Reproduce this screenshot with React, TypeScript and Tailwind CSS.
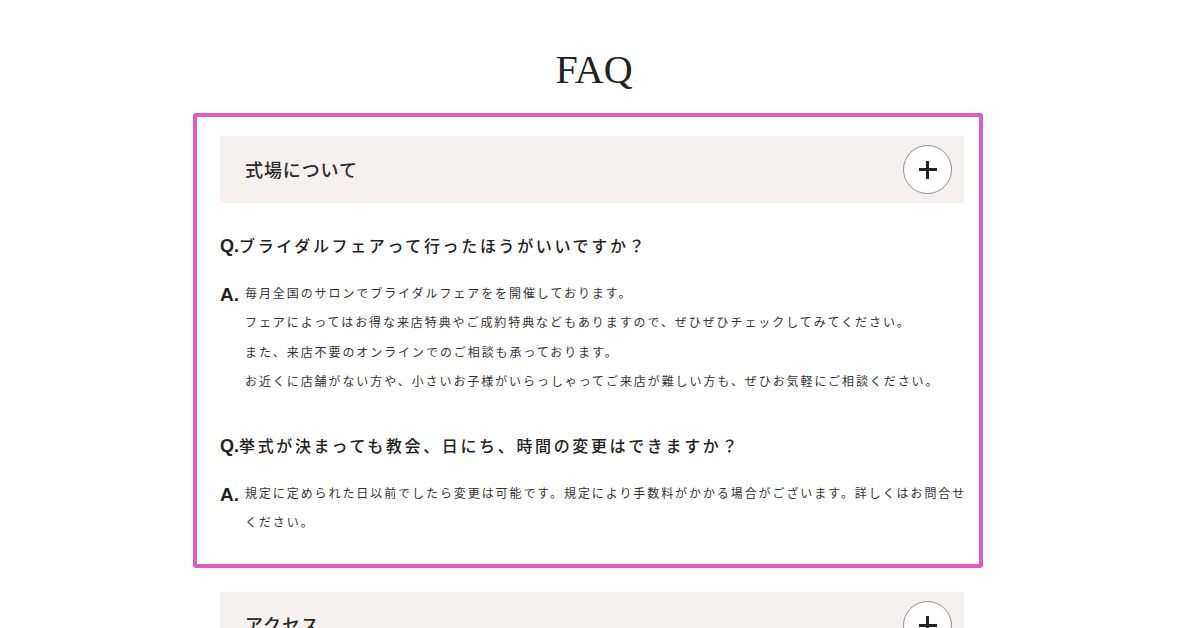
const faqs = [
  {
    q: 'ブライダルフェアって行ったほうがいいですか？',
    a: [
      '毎月全国のサロンでブライダルフェアをを開催しております。',
      'フェアによってはお得な来店特典やご成約特典などもありますので、ぜひぜひチェックしてみてください。',
      'また、来店不要のオンラインでのご相談も承っております。',
      'お近くに店舗がない方や、小さいお子様がいらっしゃってご来店が難しい方も、ぜひお気軽にご相談ください。',
    ],
  },
  {
    q: '挙式が決まっても教会、日にち、時間の変更はできますか？',
    a: ['規定に定められた日以前でしたら変更は可能です。規定により手数料がかかる場合がございます。詳しくはお問合せください。'],
  },
];

function PlusButton() {
  return (
    <button className="relative flex h-[49px] w-[49px] items-center justify-center rounded-full border border-[#8c8c8c] bg-white">
      <span className="absolute h-[3px] w-[18px] bg-[#222]" />
      <span className="absolute h-[18px] w-[3px] bg-[#222]" />
    </button>
  );
}

function CategoryHeader({ title }: { title: string }) {
  return (
    <div className="flex h-[67px] items-center justify-between bg-[#f4f1ee] pl-[25px] pr-[12px]">
      <h3 className="pt-[3px] text-[18px] font-medium tracking-[0.05em] text-[#2a2a2a]">{title}</h3>
      <PlusButton />
    </div>
  );
}

export default function App() {
  return (
    <div className="min-h-screen bg-white font-['Liberation_Sans','Noto_Sans_CJK_JP',sans-serif] text-[#333]">
      {/* Title */}
      <h2 className="pr-[12px] pt-[50px] text-center font-['Liberation_Serif',serif] text-[40px] leading-none text-[#222]">
        FAQ
      </h2>

      {/* Highlighted category */}
      <div className="ml-[193px] mt-[23px] w-[790px] rounded-[3px] border-4 border-[#e05ac4] pb-[25px] pl-[23px] pr-[15px] pt-[19px]">
        <CategoryHeader title="式場について" />

        {faqs.map((item, i) => (
          <div key={i} className={i === 0 ? 'mt-[31px]' : 'mt-[37px]'}>
            <p className="text-[16px] font-medium leading-[24px] tracking-[0.165em] text-[#222]">
              <span className="font-['Liberation_Sans',sans-serif] text-[18px] font-bold tracking-normal">Q.</span>
              {item.q}
            </p>
            <div className="mt-[21px] flex">
              <span className="w-[25px] shrink-0 font-['Liberation_Sans',sans-serif] text-[19px] font-bold leading-[29px] text-[#222]">
                A.
              </span>
              <div className="w-[728px] shrink-0 text-[12px] leading-[29.3px] tracking-[0.16em] text-[#333]">
                {item.a.map((line, j) => (
                  <p key={j}>{line}</p>
                ))}
              </div>
            </div>
          </div>
        ))}
      </div>

      {/* Next category */}
      <div className="ml-[220px] mt-[24px] w-[744px]">
        <CategoryHeader title="アクセス" />
      </div>
    </div>
  );
}
